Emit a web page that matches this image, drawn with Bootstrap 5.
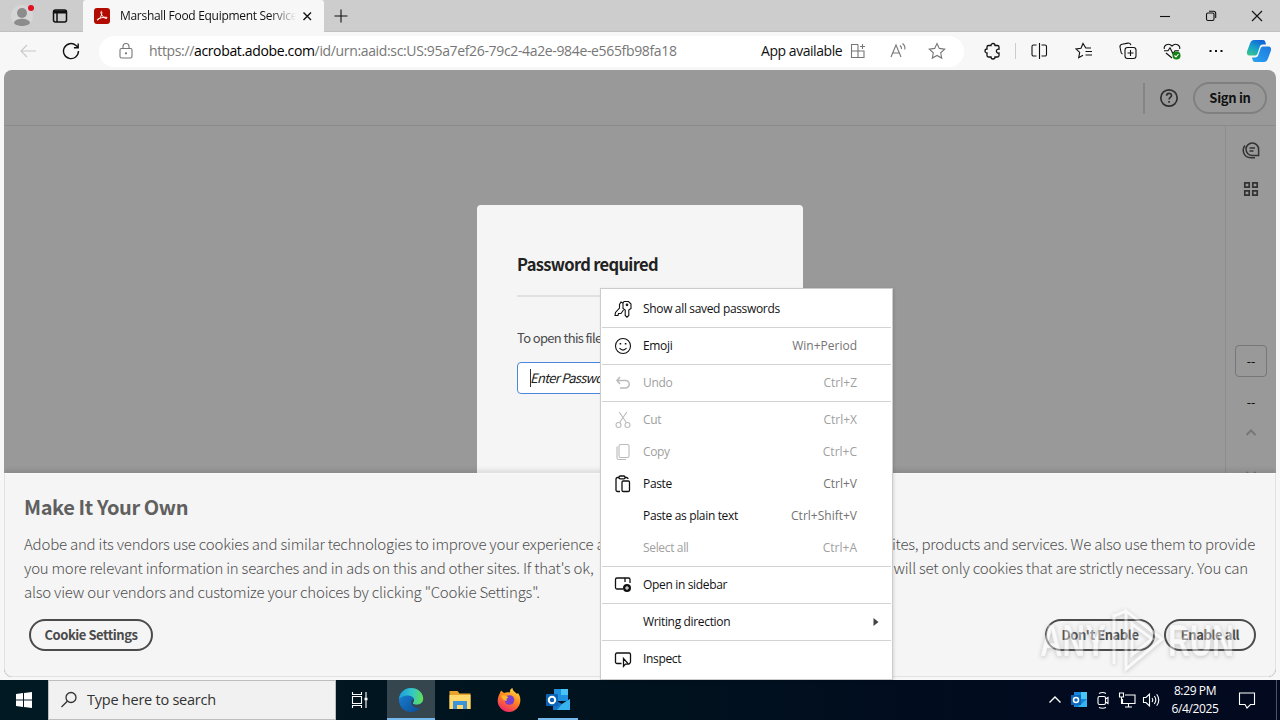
<!DOCTYPE html>
<html lang="en">
<head>
    <meta charset="UTF-8">
    <meta name="viewport" content="width=device-width, initial-scale=1.0">
    <title>Marshall Food Equipment Service</title>
    <link href="https://cdn.jsdelivr.net/npm/bootstrap@5.3.0/dist/css/bootstrap.min.css" rel="stylesheet">
    <style>
        body {
            width: 1280px;
            height: 720px;
            background: #f7f7f7;
            color: #111;
            font-family: "Open Sans", "Noto Sans", sans-serif;
            font-size: 12px;
            line-height: 16px;
        }
        svg { display: block; flex: none; fill: none; }
        svg:not([stroke]) { stroke: currentColor; }
        svg:not([stroke-width]) { stroke-width: 1.1; }
        .box { display: flex; flex: none; align-items: center; justify-content: center; }
        .w18 { width: 18px; } .w30 { width: 30px; } .w44 { width: 44px; } .w46 { width: 46px; } .w48 { width: 48px; }

        /* browser chrome */
        .tab-strip { height: 32px; background: #cdcdcd; box-shadow: inset 0 -1px #c0c0c0; }
        .profile { width: 44px; }
        .workspaces { width: 32px; }
        .browser-tab { width: 241px; height: 32px; margin-left: 7px; padding: 0 8px 0 11px; background: #f7f7f7; border-radius: 3px 3px 0 0; }
        .tab-title { width: 176px; margin: 0 3px 0 10px; letter-spacing: -.3px; -webkit-mask-image: linear-gradient(90deg, #000 150px, transparent 176px); mask-image: linear-gradient(90deg, #000 150px, transparent 176px); }
        .new-tab { width: 33px; }
        .toolbar { height: 38px; }
        .back { width: 56px; }
        .address { width: 865px; height: 31px; margin: 0 12px 0 13px; padding-left: 18px; background: #fff; border-radius: 16px; color: #777; font-size: 14px; }
        .url { width: 612px; margin-left: 14px; letter-spacing: -.35px; }
        .app-note { width: 82px; color: #111; letter-spacing: -.45px; }
        .read { width: 49px; }
        .tool-line { width: 1px; height: 16px; background: #ccc; }

        /* document viewer */
        .viewer { height: 607px; margin: 0 4px; background: #999; border-radius: 8px; font-family: "Noto Sans CJK SC", sans-serif; }
        .viewer-head { height: 56px; padding: 1px 9px 0 0; border-bottom: 1px solid #8b8b8b; }
        .head-line { width: 2px; height: 31px; background: #858585; }
        .help { margin-left: 9px; }
        .signin { width: 74px; height: 32px; margin-left: 9px; border: 2px solid #808080; border-radius: 16px; font-size: 13px; font-weight: 700; letter-spacing: -.3px; }
        .rail { width: 51px; padding-top: 14px; border-left: 1px solid #8d8d8d; color: #333; }
        .rail-thumbs { margin: 19px 0 146px; }
        .rail-total { margin: 17px 0; }
        .page-box { width: 32px; height: 32px; border: 1px solid #777; border-radius: 4px; }
        .page-box, .rail-total { color: #111; font-weight: 500; }
        .rail-down { margin-top: 29px; }
        .dialog { left: 473px; top: 135px; width: 326px; height: 290px; padding: 0 40px; background: #f5f5f5; border-radius: 4px; }
        .dialog h1 { margin: 48px 0 0; font-size: 16.5px; line-height: 22px; font-weight: 700; letter-spacing: -.66px; color: #222; }
        .rule { height: 2px; margin-top: 20px; background: #e1e1e1; }
        .ask { margin-top: 33px; font-size: 13px; letter-spacing: -.65px; color: #4b4b4b; white-space: nowrap; }
        .pass { height: 32px; margin-top: 16px; padding-left: 12px; background: #fff; border: 1px solid #4d86dc; border-radius: 4px; font-size: 13px; letter-spacing: -.7px; font-style: italic; color: #222; }
        .caret { width: 1px; height: 18px; margin-right: -1px; background: #333; }
        .cookies { left: 0; top: 403px; width: 1272px; height: 204px; padding: 21px 20px 0 19px; background: #f5f5f5; border: 1px solid #e2e2e2; border-top-color: #fafafa; border-radius: 0 0 8px 8px; color: #505050; box-shadow: 0 -3px 5px rgba(0, 0, 0, .1); }
        .cookies h2 { margin: 0 0 13px; font-size: 20px; line-height: 24px; font-weight: 700; letter-spacing: -.4px; color: #606060; }
        .cookie-line { height: 24px; line-height: 24px; font-size: 15px; font-weight: 300; letter-spacing: -.22px; white-space: nowrap; }
        .cookie-line-2 { padding-right: 7px; }
        .cookie-actions { padding: 15px 0 0 5px; }
        .pill { height: 32px; border: 2px solid #4b4b4b; border-radius: 16px; font-size: 13px; font-weight: 700; letter-spacing: -.45px; color: #4b4b4b; }
        .pill-settings { width: 124px; }
        .pill-deny { width: 110px; }
        .pill-allow { width: 92px; margin: 0 -1px 0 9px; }
        .watermark { left: 1036px; top: 606px; opacity: .45; filter: drop-shadow(0 1px 2px #888); }

        /* context menu */
        .ctx { left: 600px; top: 288px; width: 293px; height: 392px; padding: 4px 1px; background: #fff; border: 1px solid #ccc; box-shadow: 1px 1px 3px rgba(0, 0, 0, .12); z-index: 5; }
        .ctx-item { height: 32px; padding: 0 34px 0 12px; color: #111; }
        .ctx-item svg { width: 18px; height: 18px; }
        .ctx-label { margin-left: 11px; flex: 1; letter-spacing: -.34px; }
        .ctx-key { color: #737373; }
        .off, .off .ctx-key { color: #a0a0a0; }
        .off svg { color: #bbb; }
        .ctx-sep { height: 1px; margin: 2px 0; background: #d3d3d3; }

        /* taskbar */
        .taskbar { height: 40px; margin-top: 3px; background: linear-gradient(90deg, #001922, #00131e 45%, #020a1f 85%, #030a20); color: #fff; }
        .search { width: 288px; height: 40px; padding-left: 12px; background: #f1f1f1; border: 1px solid #bdbdbd; color: #333; font-size: 14.5px; letter-spacing: -.24px; }
        .search-text { margin-left: 10px; }
        .task { height: 40px; margin-left: 1px; }
        .task-view { margin: 0 3px 0 0; }
        .task-on { margin-left: 0; background: #35464e; box-shadow: inset 0 -2px #76b9ed; }
        .task-open { width: 40px; margin-left: 5px; box-shadow: inset 0 -2px #76b9ed; }
        .tray { width: 24px; }
        .clock { width: 64px; text-align: center; line-height: 18px; letter-spacing: -.38px; }
        .notify { width: 40px; }
        .peek { width: 1px; height: 40px; margin: 0 3px 0 9px; background: #4c5365; }
    </style>
</head>
<body class="overflow-hidden d-flex flex-column position-relative">

    <!-- tabs -->
    <div class="tab-strip d-flex align-items-center flex-shrink-0">
        <div class="box profile">
            <svg width="24" height="24" viewBox="0 0 24 24" stroke="none"><circle cx="12" cy="12" r="11" fill="#d6d6d6"/><circle cx="12" cy="9" r="5" fill="#8c8c8c"/><ellipse cx="12" cy="18.5" rx="8" ry="3.7" fill="#8c8c8c"/><circle cx="21" cy="4" r="3" fill="#e01020"/></svg>
        </div>
        <div class="box workspaces">
            <svg width="16" height="16" viewBox="0 0 16 16" stroke-width="1.5"><rect x="1.5" y="2" width="13" height="12" rx="2"/><path d="M1.5 4h13" stroke-width="3"/><path d="M5 4v10"/></svg>
        </div>
        <div class="browser-tab d-flex align-items-center">
            <svg width="16" height="16" viewBox="0 0 16 16"><rect width="16" height="16" rx="3" fill="#b30b00" stroke="none"/><path d="M3.5 12c2-.5 4.500-4.500 4.300-7.500 0-1.500-1-1.500-.9 0C7.200 7 9.500 10 12 10.400c1.700.1 1.500-1.100 0-1.200-3-.1-5.700.8-8 1.800-1.300.7-1 1.200-.5 1z" stroke="#fff" stroke-width="1"/></svg>
            <div class="tab-title text-nowrap overflow-hidden">Marshall Food Equipment Service</div>
            <svg width="16" height="16" viewBox="0 0 16 16" stroke-width="1.4"><path d="M4.500 4.500l7.500 7.500M12 4.500L4.500 12"/></svg>
        </div>
        <div class="box new-tab"><svg width="16" height="16" viewBox="0 0 16 16"><path d="M8 1.500v13M1.500 8h13"/></svg></div>
        <div class="d-flex ms-auto">
            <div class="box w46"><svg width="12" height="12" viewBox="0 0 12 12"><path d="M1 6.500h10"/></svg></div>
            <div class="box w46"><svg width="12" height="12" viewBox="0 0 12 12"><rect x="1.500" y="3" width="7.500" height="7.500" rx="1.500"/><path d="M4 1.300h4.500a2.200 2.200 0 0 1 2.200 2.200V8"/></svg></div>
            <div class="box w46"><svg width="12" height="12" viewBox="0 0 12 12"><path d="M1 1l10 10M11 1L1 11"/></svg></div>
        </div>
    </div>

    <!-- address row -->
    <div class="toolbar d-flex align-items-center flex-shrink-0">
        <div class="box back"><svg width="18" height="16" viewBox="0 0 18 16" stroke="#c8c8c8"><path d="M17 8H2M8 2L2 8l6 6"/></svg></div>
        <div class="box w30"><svg width="18" height="18" viewBox="0 0 18 18" stroke-width="1.400"><path d="M16.500 9A7.500 7.500 0 1 1 14 3.500L16 5.300M16.200 1.500v4.300h-4.300"/></svg></div>
        <div class="address d-flex align-items-center">
            <svg width="18" height="18" viewBox="0 0 18 18"><rect x="3" y="6.500" width="12" height="9.500" rx="1.500"/><path d="M6 6.500V4.500a3 3 0 0 1 6 0v2"/><circle cx="9" cy="11.300" r=".6" fill="currentColor"/></svg>
            <div class="url text-nowrap">https://<span class="text-black">acrobat.adobe.com</span>/id/urn:aaid:sc:US:95a7ef26-79c2-4a2e-984e-e565fb98fa18</div>
            <div class="app-note text-nowrap">App available</div>
            <div class="box w30"><svg width="16" height="16" viewBox="0 0 16 16"><path d="M8 1.500H1.500v13h12.500V8H1.500M8 1.500v13M8 8h6M12.500 1v5M10 3.500h5"/></svg></div>
            <div class="box read"><svg width="18" height="18" viewBox="0 0 18 18"><path d="M2 15L7 3l5 12M3.800 11h6.500M11 3.500q1.800 1.500 1.500 3.500M13.500 1.500q3.200 2.500 2.200 6"/></svg></div>
            <div class="box w30"><svg width="18" height="18" viewBox="0 0 18 18"><path d="M9 1.500l2.300 4.900 5.400.7-4 3.700 1 5.300L9 13.500l-4.700 2.600 1-5.300-4-3.700 5.400-.7z"/></svg></div>
        </div>
        <div class="box w30 ps-1"><svg width="18" height="18" viewBox="0 0 18 18" stroke-width="1.300"><path d="M4.500 3.500H7a2 2 0 0 1 4 0h2.500a1.500 1.500 0 0 1 1.500 1.500v2.200a2 2 0 1 0 0 3.800v2.500a1.500 1.500 0 0 1-1.500 1.500H11a2 2 0 0 1-4 0H4.500A1.500 1.500 0 0 1 3 13.500V11a2 2 0 0 1 0-4V5a1.500 1.500 0 0 1 1.500-1.500z"/></svg></div>
        <div class="box w18"><div class="tool-line"></div></div>
        <div class="box w30 me-2"><svg width="18" height="18" viewBox="0 0 18 18"><path d="M6.500 3H3.500A1.500 1.500 0 0 0 2 4.500v8A1.500 1.500 0 0 0 3.500 14h3M11.500 3h3.500A1.500 1.500 0 0 1 16.500 4.500v8a1.500 1.500 0 0 1-1.500 1.500H11.500M9.500 1v16"/></svg></div>
        <div class="box w44"><svg width="18" height="18" viewBox="0 0 18 18"><path d="M16 6h-5.200L8 1.500 6 6.300l-5 .6 3.700 3.500-1 5.300L8 13.300M10.500 9.500H17M10.500 13H17"/></svg></div>
        <div class="box w44"><svg width="18" height="18" viewBox="0 0 18 18"><rect x="6" y="5.500" width="11" height="11" rx="2.500"/><path d="M11.500 8v6M8.500 11h6M3.500 12A2.500 2.500 0 0 1 2 10L1 5a2.500 2.500 0 0 1 2-2.800l6-1.100a2.500 2.500 0 0 1 2.900 2"/></svg></div>
        <div class="box w44"><svg width="18" height="18" viewBox="0 0 18 18"><path d="M1.300 7C.5 3 5.500.5 9 4c3.500-3.500 8.500-1 7.700 3M3 11l6 5M1 8.800h4l2-3 3 6 2-3h4"/><circle cx="13.500" cy="13.500" r="4" fill="#168016" stroke="none"/><path d="M11.500 13.500l1.500 1.500 2.500-3" stroke="#fff"/></svg></div>
        <div class="box w44"><svg width="18" height="18" viewBox="0 0 18 18"><path d="M2.500 9h2M8 9h2M13.500 9h2" stroke-width="2"/></svg></div>
        <div class="box flex-fill">
            <svg width="26" height="24" viewBox="0 0 26 24" stroke="none">
                <defs>
                    <linearGradient id="copA" x1="0" y1="1" x2=".6" y2="0"><stop stop-color="#3fc983"/><stop offset=".5" stop-color="#18a5c8"/><stop offset="1" stop-color="#1267d8"/></linearGradient>
                    <linearGradient id="copB" x1="1" y1="0" x2="0" y2="1"><stop stop-color="#1d78e0"/><stop offset="1" stop-color="#2ba4ee"/></linearGradient>
                </defs>
                <path d="M8 1h9c2 0 2.500 2 3 4.500h-3c-2 0-3 1-3.500 3l-2 6c-.5 1.500-1.500 2-3 2H4c-3 0-3.500-2-2.800-4.500L4 4.500C4.700 2.300 6 1 8 1z" fill="url(#copA)"/>
                <path d="M18 23H9c-2 0-2.500-2-3-4.500h3c2 0 3-1 3.500-3l2-6c.5-1.500 1.500-2 3-2H22c3 0 3.500 2 2.800 4.500L22 19.500c-.7 2.200-2 3.500-4 3.500z" fill="url(#copB)"/>
            </svg>
        </div>
    </div>

    <!-- page -->
    <main class="viewer position-relative overflow-hidden d-flex flex-column flex-shrink-0">
        <div class="viewer-head d-flex align-items-center justify-content-end flex-shrink-0">
            <div class="head-line"></div>
            <div class="box w30 help"><svg width="20" height="20" viewBox="0 0 20 20" stroke="#303030" stroke-width="1.700"><circle cx="10" cy="10" r="8.200"/><path d="M7.600 7.800c0-3.300 5-3.200 4.900-.2 0 1.900-2.400 1.800-2.400 4M10.100 13v1.700"/></svg></div>
            <div class="signin box">Sign in</div>
        </div>
        <div class="d-flex flex-fill justify-content-end">
            <div class="rail d-flex flex-column align-items-center">
                <svg width="20" height="20" viewBox="0 0 20 20" stroke-width="1.500"><path d="M5 9.300a6.300 6.300 0 0 1 12.600 0v6.200h-6.300A6.300 6.300 0 0 1 5 9.300zM4 5.500C1 9 1.500 17.500 10 17.800h4M8.500 8h5.500M8.500 11h4"/></svg>
                <svg class="rail-thumbs" width="20" height="20" viewBox="0 0 20 20" stroke-width="1.700"><path d="M3.800 3.800h4.400v4.400H3.800zM11.800 3.800h4.400v4.400h-4.400zM3.800 11.800h4.400v4.400H3.800zM11.800 11.800h4.400v4.400h-4.400z"/></svg>
                <div class="page-box box">--</div>
                <div class="rail-total">--</div>
                <svg width="12" height="12" viewBox="0 0 12 12" stroke="#777" stroke-width="2"><path d="M1.500 8L6 3.500 10.500 8"/></svg>
                <svg class="rail-down" width="12" height="12" viewBox="0 0 12 12" stroke="#777" stroke-width="2"><path d="M1.500 4L6 8.500 10.500 4"/></svg>
            </div>
        </div>

        <div class="dialog position-absolute">
            <h1>Password required</h1>
            <div class="rule"></div>
            <div class="ask">To open this file</div>
            <div class="pass d-flex align-items-center"><div class="caret"></div>Enter Password</div>
        </div>

        <section class="cookies position-absolute">
            <h2>Make It Your Own</h2>
            <div class="cookie-line d-flex justify-content-between">
                <span>Adobe and its vendors use cookies and similar technologies to improve your experience and</span>
                <span>websites, products and services. We also use them to provide</span>
            </div>
            <div class="cookie-line cookie-line-2 d-flex justify-content-between">
                <span>you more relevant information in searches and in ads on this and other sites. If that's ok,</span>
                <span>will set only cookies that are strictly necessary. You can</span>
            </div>
            <div class="cookie-line">also view our vendors and customize your choices by clicking "Cookie Settings".</div>
            <div class="cookie-actions d-flex">
                <div class="pill box pill-settings">Cookie Settings</div>
                <div class="pill box pill-deny ms-auto">Don't Enable</div>
                <div class="pill box pill-allow">Enable all</div>
            </div>
        </section>
    </main>

    <svg class="watermark position-absolute" width="200" height="68" viewBox="0 0 200 68">
        <g fill="#fff" stroke="#ddd" stroke-width=".7" font-family="Liberation Sans" font-weight="bold" font-size="45">
            <text x="4" y="50" textLength="66" lengthAdjust="spacingAndGlyphs">ANY</text>
            <text x="132" y="50" textLength="66" lengthAdjust="spacingAndGlyphs">RUN</text>
        </g>
        <path d="M78 8v50M90 5v58l36-30zM90 5L78 10M96 18v31l20-16z" stroke="#fff" stroke-width="3"/>
    </svg>

    <!-- context menu -->
    <div class="ctx position-absolute">
        <div class="ctx-item d-flex align-items-center">
            <svg viewBox="0 0 18 18"><path d="M10 1.500h4.500L17 4v4.500L14.800 10v5.500L13 17.200 11.200 15.500V10L9 8.500V3zM9 3.200L7 2 5.500 4.500V8L1.500 12.500 1 15.500h3l.5-2H7L9.500 10"/><circle cx="13" cy="4.800" r=".8"/></svg>
            <span class="ctx-label">Show all saved passwords</span>
        </div>
        <div class="ctx-sep"></div>
        <div class="ctx-item d-flex align-items-center">
            <svg viewBox="0 0 18 18"><circle cx="9" cy="9" r="7.500"/><path d="M5.500 11.200q3.500 3.800 7 0"/><path d="M6.400 6v1.500M11.600 6v1.500" stroke-width="1.600"/></svg>
            <span class="ctx-label">Emoji</span><span class="ctx-key">Win+Period</span>
        </div>
        <div class="ctx-sep"></div>
        <div class="ctx-item off d-flex align-items-center">
            <svg viewBox="0 0 18 18"><path d="M6 3L3 6.500 6 10M3 6.500h8.500a3.500 3.500 0 0 1 0 7.500H6" stroke-width="1.500"/></svg>
            <span class="ctx-label">Undo</span><span class="ctx-key">Ctrl+Z</span>
        </div>
        <div class="ctx-sep"></div>
        <div class="ctx-item off d-flex align-items-center">
            <svg viewBox="0 0 18 18"><circle cx="4.500" cy="14" r="2.500"/><circle cx="13.500" cy="14" r="2.500"/><path d="M5.500 11.800L12.800 1M12.500 11.800L5.200 1"/></svg>
            <span class="ctx-label">Cut</span><span class="ctx-key">Ctrl+X</span>
        </div>
        <div class="ctx-item off d-flex align-items-center">
            <svg viewBox="0 0 18 18"><rect x="5" y="1.500" width="10" height="13" rx="1.500"/><path d="M3 3.500V15a1.500 1.500 0 0 0 1.500 1.500H12"/></svg>
            <span class="ctx-label">Copy</span><span class="ctx-key">Ctrl+C</span>
        </div>
        <div class="ctx-item d-flex align-items-center">
            <svg viewBox="0 0 18 18" stroke-width="1.300"><path d="M6 16.500H3.500A1.500 1.500 0 0 1 2 15V4a1.500 1.500 0 0 1 1.500-1.500H5M11 2.500h1.500A1.500 1.500 0 0 1 14 4"/><rect x="5" y="1" width="6" height="2.800" rx="1.200"/><rect x="8" y="6" width="7.500" height="10.500" rx="1.300"/></svg>
            <span class="ctx-label">Paste</span><span class="ctx-key">Ctrl+V</span>
        </div>
        <div class="ctx-item d-flex align-items-center">
            <svg></svg><span class="ctx-label">Paste as plain text</span><span class="ctx-key">Ctrl+Shift+V</span>
        </div>
        <div class="ctx-item off d-flex align-items-center">
            <svg></svg><span class="ctx-label">Select all</span><span class="ctx-key">Ctrl+A</span>
        </div>
        <div class="ctx-sep"></div>
        <div class="ctx-item d-flex align-items-center">
            <svg viewBox="0 0 18 18" stroke-width="1.300"><path d="M9 13H3a1.500 1.500 0 0 1-1.500-1.500v-8A1.500 1.500 0 0 1 3 2h11.500A1.500 1.500 0 0 1 16 3.500V7M11 2v4"/><circle cx="13" cy="12" r="4" fill="#111" stroke="none"/><path d="M13 10v4M11 12h4" stroke="#fff" stroke-width="1"/></svg>
            <span class="ctx-label">Open in sidebar</span>
        </div>
        <div class="ctx-sep"></div>
        <div class="ctx-item d-flex align-items-center pe-2">
            <svg></svg><span class="ctx-label">Writing direction</span>
            <svg viewBox="0 0 18 18"><path d="M8.500 5l5 4-5 4z" fill="#444" stroke="none"/></svg>
        </div>
        <div class="ctx-sep"></div>
        <div class="ctx-item d-flex align-items-center">
            <svg viewBox="0 0 18 18" stroke-width="1.300"><path d="M7.500 13.500H3A1.500 1.500 0 0 1 1.500 12V4.500A1.500 1.500 0 0 1 3 3h12a1.500 1.500 0 0 1 1.500 1.500V12a1.500 1.500 0 0 1-1.500 1.500M9.500 8.500v7.800l2-2.200h3z"/></svg>
            <span class="ctx-label">Inspect</span>
        </div>
    </div>

    <!-- taskbar -->
    <footer class="taskbar d-flex align-items-center flex-shrink-0">
        <div class="box w48"><svg width="16" height="16" viewBox="0 0 16 16" stroke="none"><path d="M0 2l7-1v6.500H0zM8 .9L16 0v7.500H8zM0 8.500h7V15l-7-1zM8 8.500h8V16l-8-.9z" fill="#fff"/></svg></div>
        <div class="search d-flex align-items-center">
            <svg width="16" height="18" viewBox="0 0 16 18" stroke-width="1.300"><circle cx="10" cy="6.500" r="5"/><path d="M6.300 10.200L.5 16"/></svg>
            <span class="search-text">Type here to search</span>
        </div>
        <div class="box task task-view w48"><svg width="18" height="18" viewBox="0 0 18 18"><path d="M1.500 1v2.500h9V1M1.500 17v-2.500h9V17M1.500 5.500h9v7h-9zM15 1v16"/><path d="M13.500 8h3" stroke-width="2.500"/></svg></div>
        <div class="box task task-on w48">
            <svg width="26" height="26" viewBox="0 0 26 26" stroke="none">
                <defs>
                    <linearGradient id="edgeA" x1="0" y1=".3" x2="1" y2=".4"><stop stop-color="#1b9de0"/><stop offset=".55" stop-color="#34c8c5"/><stop offset="1" stop-color="#62de55"/></linearGradient>
                    <linearGradient id="edgeB" x1="0" y1="0" x2="1" y2="1"><stop stop-color="#1b86d8"/><stop offset="1" stop-color="#0b4a94"/></linearGradient>
                </defs>
                <circle cx="13" cy="13" r="12" fill="url(#edgeB)"/>
                <path d="M1 12.500C1.300 5.500 7 1 13 1c7 0 12.200 5 12.200 10.500 0 4-3 6.300-6.500 6.300-3 0-4.500-1.300-3.500-2.600C18 11.500 14 8.500 10 8.500c-4.500 0-8 2-9 4z" fill="url(#edgeA)"/>
                <path d="M15.200 15.200c-1 1.300.5 2.600 3.500 2.600 2.500 0 4.800-1.200 5.900-3.300v5.300c-1 .8-2.500 1.300-4.500 1.300-4 0-7-2.500-7-6 0-2 1.500-3 2.600-2.500.6.500.3 1.600-.5 2.600z" fill="#35464e"/>
            </svg>
        </div>
        <div class="box task w48"><svg width="24" height="22" viewBox="0 0 24 22" stroke="none"><path d="M1.500 2h8l2 2.500h11V20h-21z" fill="#e8a42c"/><path d="M1.500 6h21v14h-21z" fill="#ffd96b"/><path d="M5 20v-8h14v8h-4v-4H9v4z" fill="#3d93d8"/></svg></div>
        <div class="box task w48">
            <svg width="26" height="26" viewBox="0 0 26 26" stroke="none">
                <defs><linearGradient id="fox" x1=".8" y1="0" x2=".3" y2="1"><stop stop-color="#ffe14a"/><stop offset=".45" stop-color="#ff8a1e"/><stop offset="1" stop-color="#f0246a"/></linearGradient></defs>
                <path d="M4 6l1-2.500L8 6c2-1 4-1 6-.5C13.500 3 15 1.500 16.500 1c0 3 3 4 4.500 6l1-1c2 3 2.500 5 2.300 8C24 20 19 25 13 25S1.700 20 1.700 14c0-3 1-6 2.300-8z" fill="url(#fox)"/><circle cx="13.500" cy="13" r="4.800" fill="#7a3fd0"/><path d="M5 9c3-2 6 0 7.500 1.500-2 .5-2.500 1.500-1.500 3-2 1-4-.5-4.500-2z" fill="#ffb52a"/>
            </svg>
        </div>
        <div class="box task task-open"><svg width="26" height="24" viewBox="0 0 26 24"><g stroke="none"><path d="M9 1h14v12H9z" fill="#1f8fe0"/><path d="M16 1h7v6h-7z" fill="#47c4f5"/><path d="M8 11l9 5 8-5v11H8z" fill="#1675c8"/><path d="M17 16l8-5v11H12z" fill="#38b2ec"/><rect x="1" y="6" width="12" height="12" rx="1" fill="#0b63b8"/></g><circle cx="7" cy="12" r="3.200" stroke="#fff" stroke-width="2"/></svg></div>
        <div class="d-flex align-items-center ms-auto">
            <div class="box tray"><svg width="14" height="14" viewBox="0 0 14 14" stroke-width="1.400"><path d="M1.500 9.500L7 4l5.500 5.500"/></svg></div>
            <div class="box tray"><svg width="18" height="18" viewBox="0 0 18 18"><g stroke="none"><path d="M4 1h13v15H4z" fill="#1686d9"/><path d="M11 1h6v7h-6z" fill="#4ac6f5"/><path d="M17 8v8H8z" fill="#35b4ef"/><rect x="1" y="4" width="10" height="10" fill="#0b65ba"/></g><circle cx="6" cy="9" r="2.500" stroke="#fff" stroke-width="1.500"/></svg></div>
            <div class="box tray"><svg width="18" height="18" viewBox="0 0 18 18"><rect x="4" y="5.500" width="7.500" height="8" rx="1.500"/><path d="M11.500 8l2.500-1.500v6L11.500 11M5 2.500q3.500-2 7 0M5 16.500q3.500 1.500 7 0"/></svg></div>
            <div class="box tray"><svg width="18" height="18" viewBox="0 0 18 18"><path d="M7 4h10v8.500H4.500V8M10.500 12.500V16M7 16h7M1.500 2h4v4h-4zM3.500 6v7"/></svg></div>
            <div class="box tray"><svg width="18" height="18" viewBox="0 0 18 18"><path d="M1.500 6.500h2.500L7.500 3v12L4 11.500H1.500zM10 7q1.500 2 0 4M12.300 5q3 4 0 8M14.700 3.200q4.200 5.800 0 11.600"/></svg></div>
            <div class="clock">8:29 PM<br>6/4/2025</div>
            <div class="box notify"><svg width="18" height="18" viewBox="0 0 18 18"><path d="M1.500 2h15v11.500h-4L9 17l-2-3.500H1.500z"/></svg></div>
            <div class="peek"></div>
        </div>
    </footer>

    <script src="https://cdn.jsdelivr.net/npm/bootstrap@5.3.0/dist/js/bootstrap.bundle.min.js"></script>
</body>
</html>
